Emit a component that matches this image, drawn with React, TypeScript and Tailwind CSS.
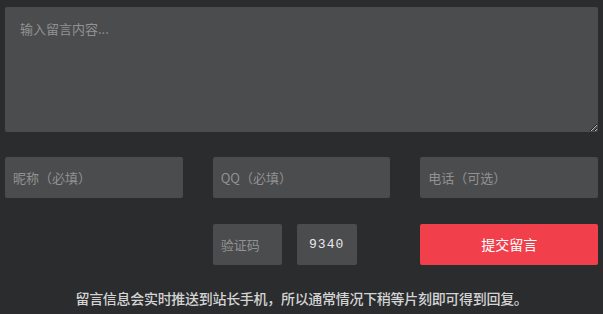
export default function App() {
  const font = { fontFamily: '"Microsoft YaHei", "Noto Sans CJK SC", sans-serif' };
  const field =
    "h-[41px] bg-[#4b4c4e] rounded-[2px] px-[8px] text-[13px] text-[#ddd] placeholder:text-[#929292] outline-none";
  return (
    <div className="min-h-[314px] bg-[#2b2c2e] px-[5px] pt-[7px]" style={font}>
      <textarea
        className="block w-full h-[125px] bg-[#4b4c4e] rounded-[2px] px-[15px] py-[12px] text-[13px] text-[#ddd] placeholder:text-[#929292] outline-none"
        placeholder="输入留言内容..."
      />
      <div className="grid grid-cols-3 gap-x-[30px] mt-[25px]">
        <input className={field} placeholder="昵称（必填）" />
        <input className={field} placeholder="QQ（必填）" />
        <input className={field} placeholder="电话（可选）" />
      </div>
      <div className="grid grid-cols-3 gap-x-[30px] mt-[26px]">
        <div />
        <div className="flex gap-[15px]">
          <input className={field + " w-[69px]"} placeholder="验证码" />
          <div className="h-[41px] w-[60px] bg-[#4b4c4e] rounded-[2px] flex items-center justify-center">
            <span className="text-[13px] text-[#e8e8e8] tracking-[1px]" style={{ fontFamily: '"Liberation Mono", monospace' }}>
              9340
            </span>
          </div>
        </div>
        <button className="h-[41px] bg-[#f23f4c] rounded-[2px] text-white text-[14px]">提交留言</button>
      </div>
      <p className="mt-[23px] text-center text-[14px] tracking-[-0.3px] text-[#d4d4d4] font-medium">
        留言信息会实时推送到站长手机，所以通常情况下稍等片刻即可得到回复。
      </p>
    </div>
  );
}
